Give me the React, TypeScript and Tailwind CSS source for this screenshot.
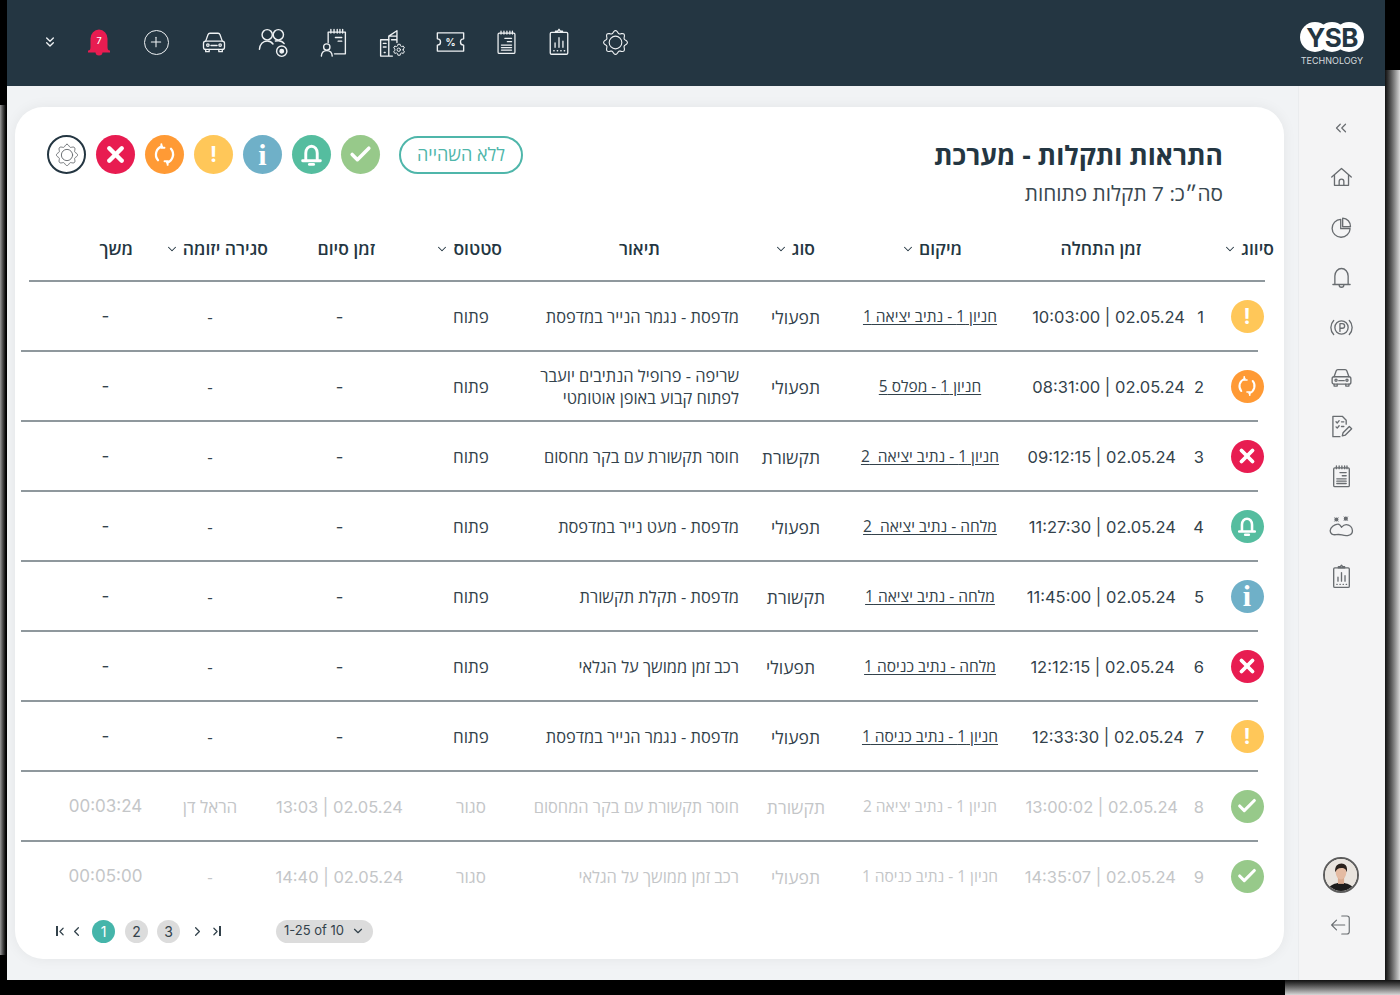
import React from 'react';
import { ChevronDown, ChevronLeft, ChevronRight, ChevronsLeft, ChevronsDown, Check, X, Plus } from 'lucide-react';

const gearPath = (() => {
  const pts: string[] = [];
  for (let i = 0; i <= 96; i++) {
    const a = (i / 96) * Math.PI * 2;
    const r = 12.6 + 1.5 * Math.cos(a * 8);
    pts.push(`${(16 + r * Math.sin(a)).toFixed(2)} ${(16 - r * Math.cos(a)).toFixed(2)}`);
  }
  return 'M' + pts.join('L') + 'Z';
})();

type IconProps = { className?: string; sw?: number };

function Svg({ className, sw = 1.5, children }: IconProps & { children: React.ReactNode }) {
  return (
    <svg viewBox="0 0 32 32" fill="none" stroke="currentColor" strokeWidth={sw} strokeLinecap="round" strokeLinejoin="round" className={className}>
      {children}
    </svg>
  );
}

const GearIcon = (p: IconProps) => (
  <Svg {...p}>
    <path d={gearPath} />
    <circle cx="16" cy="16" r="7.500" />
  </Svg>
);
const CarIcon = (p: IconProps) => (
  <Svg {...p}>
    <path d="M6.500 15l2.600-7.200A2.500 2.500 0 0 1 11.400 6h9.200a2.500 2.500 0 0 1 2.300 1.800L25.500 15" />
    <rect x="4" y="15" width="24" height="9.500" rx="2.500" />
    <path d="M6.500 24.500V27h4v-2.500M21.500 24.500V27h4v-2.500M12.500 20h7" />
    <circle cx="9" cy="19.500" r="1.400" />
    <circle cx="23" cy="19.500" r="1.400" />
  </Svg>
);
const NotesIcon = (p: IconProps) => (
  <Svg {...p}>
    <rect x="6" y="5" width="20" height="24" rx="1.500" />
    <path d="M9.500 2.500V6M13 2.500V6M16.500 2.500V6M20 2.500V6M23 2.500V6M14 11h8M17 15h5M10 19h12M10 22h12M10 25h12" />
  </Svg>
);
const ClipboardIcon = (p: IconProps) => (
  <Svg {...p}>
    <rect x="6" y="5" width="20" height="25" rx="1.500" />
    <path d="M12 5V3.500h2.500L16 1.500l1.500 2H20V5z" />
    <path d="M11.500 22v-5M16 22V11M20.500 22v-7M10 26h.5M14 26h.5M18 26h.5M22 26h.5" />
  </Svg>
);
const BellOutline = (p: IconProps) => (
  <Svg {...p}>
    <path d="M5 25h22M7.500 25v-11a8.500 9.500 0 0 1 17 0v11" />
    <path d="M13 25.500a3 3 0 0 0 6 0" />
  </Svg>
);
const HomeIcon = (p: IconProps) => (
  <Svg {...p}>
    <path d="M3.500 15.500L16 4.500l12.500 11" />
    <path d="M7 13v13h18V13" />
    <path d="M13 26v-5a3 3 0 0 1 6 0v5" />
  </Svg>
);
const PieIcon = (p: IconProps) => (
  <Svg {...p}>
    <path d="M15 5.500A11.500 11.500 0 1 0 27 17.500H15z" />
    <path d="M17.500 4a10.500 10.500 0 0 1 10 11H17.500z" />
  </Svg>
);
const ParkIcon = (p: IconProps) => (
  <Svg {...p}>
    <circle cx="16" cy="16" r="8.500" />
    <path d="M14 21v-10h3a3 3 0 0 1 0 6h-3" />
    <path d="M6 7a13 13 0 0 0 0 18M26 7a13 13 0 0 1 0 18" />
  </Svg>
);
const CheckNoteIcon = (p: IconProps) => (
  <Svg {...p}>
    <path d="M22 13V8l-5-5H5v26h9" />
    <path d="M9 10l1.500 1.500L13 8.500M9 16.500l1.500 1.500 2.500-3M16 10h3M16 16h3" />
    <path d="M17 28l1-4 8-8 3 3-8 8z" />
  </Svg>
);
const BlobIcon = (p: IconProps) => (
  <Svg {...p}>
    <path d="M11 13c-4 .5-9.500 3.500-9.500 8.500 0 4 3.500 5.500 7.500 5 3-.4 4.500-.5 7.500.3 4.500 1.200 13.500 2 13.500-5.300 0-4.500-3.500-8-8-8-3 0-4.500 1.800-6 3.500-1-2-3-4.500-5-4z" />
    <circle cx="9.500" cy="7" r="1.800" fill="currentColor" />
    <circle cx="21.500" cy="6" r="1.800" fill="currentColor" />
    <path d="M7 9.500l5-5M7 4.500l5 5M19 8.500l5-5M19 3.500l5 5" strokeWidth="0.800" />
  </Svg>
);
const LogoutIcon = (p: IconProps) => (
  <Svg {...p}>
    <path d="M17 4h7a3 3 0 0 1 3 3v18a3 3 0 0 1-3 3h-7" />
    <path d="M21 16H4M10 9.500L3.500 16l6.500 6.500" />
  </Svg>
);
const PeopleIcon = (p: IconProps) => (
  <Svg {...p}>
    <circle cx="9.500" cy="8" r="5.300" />
    <circle cx="21" cy="8" r="5.300" />
    <path d="M1.500 23c.5-5 3.500-8.500 8-8.500 2.500 0 4.500 1 6 3M18 14.500c1-.3 2-.4 3-.4 2.500 0 4.500 1 6 3" />
    <circle cx="24.500" cy="25" r="5.300" />
    <circle cx="24.500" cy="25" r="1.800" fill="currentColor" />
  </Svg>
);
const PersonNoteIcon = (p: IconProps) => (
  <Svg {...p}>
    <path d="M9 16V4.500h19v24H16" />
    <path d="M12 1.500v4M15.500 1.500v4M19 1.500v4M22 1.500v4M25 1.500v4M17 10.500h7M20 14.500h4" />
    <circle cx="7.500" cy="21" r="3.500" />
    <path d="M1.500 31c.2-3.500 2.500-6 6-6s5.800 2.500 6 6" />
  </Svg>
);
const BuildingIcon = (p: IconProps) => (
  <Svg {...p}>
    <path d="M4 13h9v18H4zM13 31h4M7 17h3M7 21h3M8 27h1" />
    <path d="M13 13V9l9-6v13M13 9h9M16 13h6" />
    <g transform="translate(24 24) scale(0.720) translate(-21 -22.700)">
      <path d="M27.800 22.700c0-.4 0-.8-.1-1.200l2-1.500-1.800-3-2.300.9a7 7 0 0 0-2-1.200l-.4-2.400h-3.500l-.4 2.400a7 7 0 0 0-2 1.200l-2.300-.9-1.800 3 2 1.500a7 7 0 0 0 0 2.400l-2 1.500 1.800 3 2.300-.9a7 7 0 0 0 2 1.200l.4 2.400h3.500l.4-2.400a7 7 0 0 0 2-1.200l2.300.9 1.800-3-2-1.500c.1-.4.1-.8.1-1.200z" />
      <circle cx="21" cy="22.700" r="2.600" />
    </g>
  </Svg>
);
const CouponIcon = (p: IconProps) => (
  <svg viewBox="0 0 32 26" fill="none" stroke="currentColor" strokeWidth={p.sw ?? 1.5} strokeLinejoin="round" className={p.className}>
    <path d="M1.500 3h29v6.500a3.500 3.500 0 0 0 0 7V23h-29v-6.500a3.500 3.500 0 0 0 0-7z" />
    <text x="16" y="17.500" textAnchor="middle" fontSize="11" fontWeight="700" fill="currentColor" stroke="none" fontFamily="Inter, sans-serif">%</text>
  </svg>
);
const RedBell = () => (
  <svg viewBox="0 0 24 28" className="w-[24px] h-[28px]">
    <path d="M1.500 23c1.500-1 2-2 2-4V10.500a8.500 9 0 0 1 17 0V19c0 2 .5 3 2 4z" fill="#e81c51" />
    <path d="M1 22.500h22V24.500H1z" fill="#e81c51" />
    <path d="M8.500 24a3.500 3.500 0 0 0 7 0z" fill="#e81c51" />
    <text x="12" y="15.500" textAnchor="middle" fontSize="9" fill="#fff" fontFamily="Inter, sans-serif" fontWeight="500">7</text>
  </svg>
);

const SyncGlyph = ({ className }: { className: string }) => (
  <svg viewBox="0 0 24 24" fill="none" stroke="#fff" strokeWidth="2.200" strokeLinecap="round" className={className}>
    <path d="M5.800 17.500A8.300 8.300 0 0 1 9.500 4.200" />
    <path d="M18.200 6.500a8.300 8.300 0 0 1-3.700 13.300" />
    <path d="M9 2v3.500h3M15 22v-3.500h-3" strokeWidth="1.800" />
  </svg>
);
const BellGlyph = ({ className }: { className: string }) => (
  <svg viewBox="0 0 24 24" fill="none" stroke="#fff" strokeWidth="2.800" strokeLinecap="round" strokeLinejoin="round" className={className}>
    <path d="M3.500 18h17M6.500 18V10.500a5.500 6.500 0 0 1 11 0V18" />
    <path d="M10 21.500h4" />
  </svg>
);

type Kind = 'ok' | 'bell' | 'info' | 'warn' | 'sync' | 'err';

const kindBg: Record<Kind, string> = {
  ok: 'bg-[#97c98a]',
  bell: 'bg-[#55bd9f]',
  info: 'bg-[#6fb0c8]',
  warn: 'bg-[#ffc759]',
  sync: 'bg-[#ff9a35]',
  err: 'bg-[#e81c51]',
};

function StatusIcon({ kind, large }: { kind: Kind; large?: boolean }) {
  const box = large ? 'w-[39px] h-[39px]' : 'w-[33px] h-[33px]';
  const g = large ? 'w-[25px] h-[25px]' : 'w-[22px] h-[22px]';
  return (
    <div className={`${box} ${kindBg[kind]} rounded-full flex items-center justify-center shrink-0`}>
      {kind === 'ok' && <Check className={g} color="#fff" strokeWidth={3.4} />}
      {kind === 'err' && <X className={g} color="#fff" strokeWidth={4.2} />}
      {kind === 'sync' && <SyncGlyph className={g} />}
      {kind === 'bell' && <BellGlyph className={g} />}
      {kind === 'warn' && <span className="text-white font-bold text-[21px] leading-none [font-family:Inter,sans-serif]">!</span>}
      {kind === 'info' && <span className="text-white font-bold text-[30px] leading-none [font-family:'Liberation_Serif',serif]">i</span>}
    </div>
  );
}

type Row = {
  n: number;
  kind: Kind;
  time: string;
  timeCls: string;
  loc: string;
  type: string;
  typeCls: string;
  desc: React.ReactNode;
  status: string;
  end: string;
  closer: string;
  dur: string;
  done?: boolean;
};

const rows: Row[] = [
  { n: 1, kind: 'warn', time: '10:03:00 | 02.05.24', timeCls: 'pr-[3px]', loc: 'חניון 1 - נתיב יציאה 1', type: 'תפעולי', typeCls: 'pr-[20px]', desc: 'מדפסת - נגמר הנייר במדפסת', status: 'פתוח', end: '-', closer: '-', dur: '-' },
  { n: 2, kind: 'sync', time: '08:31:00 | 02.05.24', timeCls: 'pr-[3px]', loc: 'חניון 1 - מפלס 5', type: 'תפעולי', typeCls: 'pr-[20px]', desc: <>שריפה - פרופיל הנתיבים יועבר<br />לפתוח קבוע באופן אוטומטי</>, status: 'פתוח', end: '-', closer: '-', dur: '-' },
  { n: 3, kind: 'err', time: '09:12:15 | 02.05.24', timeCls: 'pr-[12px]', loc: 'חניון 1 - נתיב יציאה\u00a0 2', type: 'תקשורת', typeCls: 'pr-[20px]', desc: 'חוסר תקשורת עם בקר מחסום', status: 'פתוח', end: '-', closer: '-', dur: '-' },
  { n: 4, kind: 'bell', time: '11:27:30 | 02.05.24', timeCls: 'pr-[12px]', loc: 'מלחה - נתיב יציאה\u00a0 2', type: 'תפעולי', typeCls: 'pr-[20px]', desc: 'מדפסת - מעט נייר במדפסת', status: 'פתוח', end: '-', closer: '-', dur: '-' },
  { n: 5, kind: 'info', time: '11:45:00 | 02.05.24', timeCls: 'pr-[12px]', loc: 'מלחה - נתיב יציאה 1', type: 'תקשורת', typeCls: 'pr-[15px]', desc: 'מדפסת - תקלת תקשורת', status: 'פתוח', end: '-', closer: '-', dur: '-' },
  { n: 6, kind: 'err', time: '12:12:15 | 02.05.24', timeCls: 'pr-[13px]', loc: 'מלחה - נתיב כניסה 1', type: 'תפעולי', typeCls: 'pr-[25px]', desc: 'רכב זמן ממושך על הגלאי', status: 'פתוח', end: '-', closer: '-', dur: '-' },
  { n: 7, kind: 'warn', time: '12:33:30 | 02.05.24', timeCls: 'pr-[4px]', loc: 'חניון 1 - נתיב כניסה 1', type: 'תפעולי', typeCls: 'pr-[20px]', desc: 'מדפסת - נגמר הנייר במדפסת', status: 'פתוח', end: '-', closer: '-', dur: '-' },
  { n: 8, kind: 'ok', time: '13:00:02 | 02.05.24', timeCls: 'pr-[10px]', loc: 'חניון 1 - נתיב יציאה 2', type: 'תקשורת', typeCls: 'pr-[15px]', desc: 'חוסר תקשורת עם בקר המחסום', status: 'סגור', end: '13:03 | 02.05.24', closer: 'הראל דן', dur: '00:03:24', done: true },
  { n: 9, kind: 'ok', time: '14:35:07 | 02.05.24', timeCls: 'pr-[12px]', loc: 'חניון 1 - נתיב כניסה 1', type: 'תפעולי', typeCls: 'pr-[20px]', desc: 'רכב זמן ממושך על הגלאי', status: 'סגור', end: '14:40 | 02.05.24', closer: '-', dur: '00:05:00', done: true },
];

const headers: { label: string; w: string; sort?: boolean }[] = [
  { label: 'סיווג', w: 'w-[133px]', sort: true },
  { label: 'זמן התחלה', w: 'w-[179px]' },
  { label: 'מיקום', w: 'w-[147px]', sort: true },
  { label: 'סוג', w: 'w-[155px]', sort: true },
  { label: 'תיאור', w: 'w-[158px]' },
  { label: 'סטטוס', w: 'w-[127px]', sort: true },
  { label: 'זמן סיום', w: 'w-[107px]' },
  { label: 'סגירה יזומה', w: 'w-[135px]', sort: true },
  { label: 'משך', w: 'w-[60px]' },
];

const sideIcons = [HomeIcon, PieIcon, BellOutline, ParkIcon, CarIcon, CheckNoteIcon, NotesIcon, BlobIcon, ClipboardIcon];

function TopBar() {
  const ic = 'text-[#eef1f3]';
  return (
    <div className="h-[86px] bg-[#243642] flex items-center shrink-0 pl-[27px] pr-[21px] pb-[2px]" dir="ltr">
      <div className="w-[32px] flex justify-center"><ChevronsDown className={`w-[16px] h-[16px] ${ic}`} strokeWidth={2} /></div>
      <div className="w-[32px] ml-[17px] flex justify-center"><RedBell /></div>
      <div className="w-[32px] ml-[25px] flex justify-center">
        <div className="w-[25px] h-[25px] rounded-full border-[1.5px] border-[#eef1f3] flex items-center justify-center"><Plus className={`w-[16px] h-[16px] ${ic}`} strokeWidth={1.6} /></div>
      </div>
      <div className="w-[32px] ml-[26px] flex justify-center"><CarIcon className={`w-[28px] h-[28px] ${ic}`} /></div>
      <div className="w-[32px] ml-[27px] flex justify-center"><PeopleIcon className={`w-[31px] h-[31px] ${ic}`} /></div>
      <div className="w-[32px] ml-[29px] flex justify-center"><PersonNoteIcon className={`w-[29px] h-[29px] ${ic}`} /></div>
      <div className="w-[32px] ml-[25px] flex justify-center"><BuildingIcon className={`w-[29px] h-[29px] ${ic}`} /></div>
      <div className="w-[32px] ml-[27px] flex justify-center"><CouponIcon className={`w-[29px] h-[24px] ${ic}`} /></div>
      <div className="w-[32px] ml-[24px] flex justify-center"><NotesIcon className={`w-[27px] h-[27px] ${ic}`} /></div>
      <div className="w-[32px] ml-[21px] flex justify-center"><ClipboardIcon className={`w-[28px] h-[28px] ${ic}`} /></div>
      <div className="w-[32px] ml-[24px] flex justify-center"><GearIcon className={`w-[27px] h-[27px] ${ic}`} sw={1.3} /></div>
      <div className="ml-auto mt-[4px] flex flex-col items-center">
        <svg viewBox="0 0 64 30" className="w-[64px] h-[30px]">
          <circle cx="15" cy="15" r="15" fill="#fff" />
          <circle cx="32" cy="15" r="15" fill="#fff" />
          <circle cx="49" cy="15" r="15" fill="#fff" />
          <text x="32" y="24.500" textAnchor="middle" fontSize="26" fontWeight="700" fill="#243642" fontFamily="Inter, sans-serif" letterSpacing="-0.500">YSB</text>
        </svg>
        <span className="text-[9px] leading-[11px] mt-[3px] text-[#d5dade] [font-family:Inter,sans-serif]">TECHNOLOGY</span>
      </div>
    </div>
  );
}

function Sidebar() {
  return (
    <div className="w-[87px] shrink-0 bg-[#f4f4f5] border-l border-[#eaecee] flex flex-col items-center pt-[17px] pr-[2px] pb-[43px] text-[#686c70]">
      <div className="h-[50px] flex items-center"><ChevronsLeft className="w-[18px] h-[18px]" strokeWidth={1.6} /></div>
      {sideIcons.map((Icon, i) => (
        <div key={i} className="h-[49.800px] flex items-center">
          <Icon className="w-[25px] h-[25px]" sw={1.7} />
        </div>
      ))}
      <div className="mt-auto w-[36px] h-[36px] rounded-full border-2 border-[#5d5d5d] overflow-hidden">
        <svg viewBox="0 0 36 36" className="w-full h-full">
          <rect width="36" height="36" fill="#e9e4de" />
          <path d="M3 36c1-6 7-8 11-9h8c4 1 10 3 11 9z" fill="#1c1c1c" />
          <rect x="14.500" y="20" width="7" height="8" fill="#d9ab90" />
          <ellipse cx="18" cy="15" rx="6" ry="8" fill="#e4bba2" />
          <path d="M11.500 15c-1-7 3-10 7-10s7.500 3 6 10c-.5-3-2-5-6-5s-6 2-7 5z" fill="#2a211c" />
        </svg>
      </div>
      <LogoutIcon className="w-[24px] h-[24px] mt-[20px]" />
    </div>
  );
}

function TableHeader() {
  return (
    <div className="flex h-[24px] items-center pr-[10px] text-[#243642] text-[17.500px] font-semibold">
      {headers.map(h => (
        <div key={h.label} className={`${h.w} shrink-0 flex items-center gap-[4px]`}>
          <span>{h.label}</span>
          {h.sort && <ChevronDown className="w-[14px] h-[14px] mt-[2px]" strokeWidth={1.8} />}
        </div>
      ))}
    </div>
  );
}

function TableRow({ row, last }: { row: Row; last: boolean }) {
  const col = row.done ? 'text-[#c4c6c8]' : 'text-[#33424b]';
  const num = 'pt-[2px] text-[16.500px] [font-family:Inter,sans-serif] whitespace-nowrap';
  return (
    <>
      <div className={`grid grid-cols-[36px_41px_168px_180px_90px_220px_118px_145px_114px_95px] h-[68px] items-center text-[17px] ${col}`}>
        <div className="flex justify-center"><StatusIcon kind={row.kind} /></div>
        <div className={`${num} pr-[25px]`}>{row.n}</div>
        <div className={`${num} ${row.timeCls}`}><span dir="ltr">{row.time}</span></div>
        <div className="pt-[2px] text-center whitespace-nowrap text-[15.500px]"><span className={row.done ? '' : 'underline underline-offset-2'}>{row.loc}</span></div>
        <div className={`${row.typeCls} pt-[2px] whitespace-nowrap text-[17.500px]`}>{row.type}</div>
        <div className="pt-[2px] pr-[11px] leading-[22px] text-[16.400px]">{row.desc}</div>
        <div className="pt-[2px] text-center">{row.status}</div>
        <div className={`${num} text-center`}><span dir="ltr">{row.end}</span></div>
        <div className="pt-[2px] text-center">{row.closer}</div>
        <div className={`${num} text-center text-[17px]`}>{row.dur}</div>
      </div>
      {!last && <div className="h-[2px] bg-[#8f989d] mr-[7px]" />}
    </>
  );
}

function Pagination() {
  return (
    <div dir="ltr" className="flex items-center pl-[41px] h-[24px] text-[#33424b] text-[14px] [font-family:Inter,sans-serif]">
      <div className="flex items-center w-[11px]"><span className="w-[2px] h-[10px] bg-[#33424b] shrink-0" /><ChevronLeft className="w-[13px] h-[13px] -ml-[3px] shrink-0" strokeWidth={2.2} /></div>
      <ChevronLeft className="w-[15px] h-[15px] ml-[2px]" strokeWidth={2} />
      <div className="ml-[8px] w-[23px] h-[23px] rounded-full bg-[#45b5aa] text-white flex items-center justify-center">1</div>
      <div className="ml-[10px] w-[23px] h-[23px] rounded-full bg-[#dcdcdc] flex items-center justify-center">2</div>
      <div className="ml-[9px] w-[23px] h-[23px] rounded-full bg-[#dcdcdc] flex items-center justify-center">3</div>
      <ChevronRight className="w-[15px] h-[15px] ml-[10px]" strokeWidth={2} />
      <div className="flex items-center w-[11px] ml-[4px]"><ChevronRight className="w-[13px] h-[13px] shrink-0" strokeWidth={2.2} /><span className="w-[2px] h-[10px] bg-[#33424b] -ml-[3px] shrink-0" /></div>
      <div className="ml-[56px] w-[97px] h-[23px] rounded-full bg-[#dcdcdc] flex items-center justify-center gap-[7px] text-[13px]">
        <span>1-25 of 10</span>
        <ChevronDown className="w-[14px] h-[14px]" strokeWidth={2} />
      </div>
    </div>
  );
}

export default function App() {
  return (
    <div className="relative w-[1400px] h-[995px] bg-black overflow-hidden [font-family:'Open_Sans','Liberation_Sans',sans-serif]" dir="rtl">
      <div className="absolute left-0 top-[105px] w-[7px] h-[850px] bg-gradient-to-l from-black to-[#9a9a9a]" />
      <div className="absolute right-0 top-[70px] w-[15px] h-[925px] bg-gradient-to-r from-[#111] to-[#d8d8d8]" />
      <div className="absolute right-0 bottom-0 w-[115px] h-[15px] bg-gradient-to-b from-[#111] to-[#d8d8d8]" />
      <div className="relative mr-[15px] w-[1378px] h-[980px] flex flex-col">
        <TopBar />
        <div className="flex-1 flex min-h-0 bg-[#f1f3f5]">
          <Sidebar />
          <div className="flex-1 pt-[21px] pr-[14px] pl-[8px] pb-[21px]">
            <div className="relative h-full bg-white rounded-[28px] shadow-[0_0_14px_rgba(0,0,0,0.06)]">
              <div className="flex justify-between items-start pt-[28px] pr-[61px] pl-[32px] h-[103px]">
                <div>
                  <div className="text-[26.500px] leading-[36px] font-bold text-[#243642] mt-[2px]">התראות ותקלות - מערכת</div>
                  <div className="text-[20.800px] leading-[28px] text-[#3a4850] mt-[6px]">סה״כ: 7 תקלות פתוחות</div>
                </div>
                <div className="flex items-center gap-[10px]">
                  <div className="w-[124px] h-[38px] rounded-full border-2 border-[#4fb6aa] text-[#4fb6aa] text-[18px] flex items-center justify-center ml-[9px]">ללא השהייה</div>
                  <StatusIcon kind="ok" large />
                  <StatusIcon kind="bell" large />
                  <StatusIcon kind="info" large />
                  <StatusIcon kind="warn" large />
                  <StatusIcon kind="sync" large />
                  <StatusIcon kind="err" large />
                  <div className="w-[39px] h-[39px] rounded-full border-2 border-[#243642] flex items-center justify-center shrink-0">
                    <GearIcon className="w-[24px] h-[24px] text-[#6b6f73]" sw={1.3} />
                  </div>
                </div>
              </div>
              <div className="mt-[26px]">
                <TableHeader />
                <div className="h-[2px] bg-[#8f989d] mt-[20px] mr-[19px] ml-[14px]" />
                <div className="mr-[19px] ml-[6px]">
                  {rows.map((r, i) => <TableRow key={r.n} row={r} last={i === rows.length - 1} />)}
                </div>
              </div>
              <div className="mt-[9px]"><Pagination /></div>
            </div>
          </div>
        </div>
      </div>
    </div>
  );
}
